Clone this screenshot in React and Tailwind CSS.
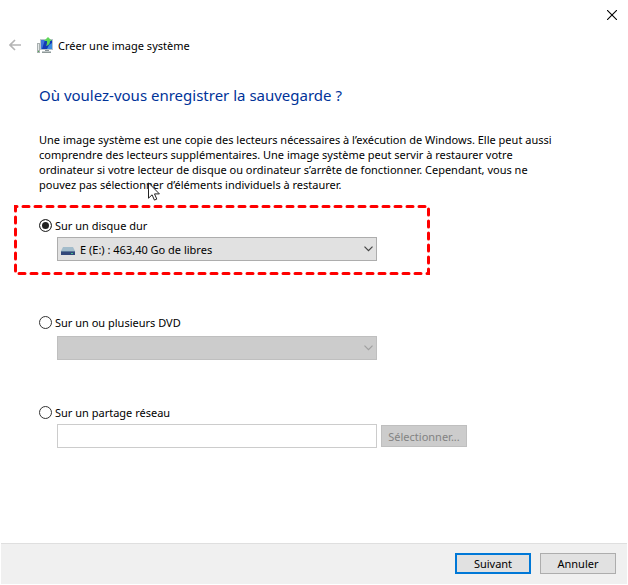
import React, { useState } from 'react';

const BackIcon = () => (
  <svg className="w-3 h-3" viewBox="0 0 12 12" fill="none" stroke="#b4b4b4" strokeWidth="1.6">
    <path d="M12 6H1M6 1L1 6l5 5" />
  </svg>
);

const CloseIcon = () => (
  <svg className="w-[10px] h-[10px]" viewBox="0 0 10 10" stroke="#000" strokeWidth="1.1">
    <path d="M0 0l10 10M10 0L0 10" />
  </svg>
);

const BackupIcon = () => (
  <svg className="w-4 h-4" viewBox="0 0 16 16">
    <path d="M0 6h3v10H0z" fill="#a9b0b0" />
    <path d="M1 7h1v6H1z" fill="#e4e8e8" />
    <path d="M1 14h1v1H1z" fill="#4fae4f" />
    <path d="M3 2h13v11H3z" fill="#b9c3cb" />
    <path d="M4 3h11v9H4z" fill="#1438b4" />
    <path d="M4 3h4L5 12H4z" fill="#3f74dc" />
    <path d="M12 8l3-2v6h-5z" fill="#3b8ce0" />
    <path d="M8 13h4v1H8z" fill="#8a9498" />
    <path d="M5 14h9v2H5z" fill="#c3caca" />
    <path d="M5 15h9v1H5z" fill="#8f9999" />
    <path d="M11 0l4 4h-2c0 3-1 4-4 5 1-2 1-3 1-5H7z" fill="#5fd858" />
  </svg>
);

const DriveIcon = () => (
  <svg className="w-[14px] h-2" viewBox="0 0 14 8">
    <path d="M2 0h10l2 4H0z" fill="#a3bccb" />
    <path d="M0 4h14v4H0z" fill="#33487a" />
    <path d="M0 4h14v1H0z" fill="#5b7899" />
    <path d="M10 6h2v1h-2z" fill="#45c08c" />
  </svg>
);

const ChevronIcon = ({ color }) => (
  <svg className="w-[9px] h-[6px]" viewBox="0 0 9 6" fill="none" stroke={color} strokeWidth="1.2">
    <path d="M0.5 0.7l4 4 4-4" />
  </svg>
);

const CursorIcon = () => (
  <svg className="w-3 h-[19px]" viewBox="0 0 12 19">
    <path
      d="M0.5 0.8v15.4l3.6-3.4 2.3 5.3 2.4-1-2.3-5.2h4.9z"
      fill="#fff"
      stroke="#222"
      strokeWidth="1"
    />
  </svg>
);

const Highlight = () => (
  <svg
    className="absolute -left-[25px] -top-3 w-[416px] h-[70px] pointer-events-none"
    viewBox="0 0 416 70"
    fill="none"
  >
    <rect
      x="1.5"
      y="1.5"
      width="413"
      height="67"
      stroke="#fe0000"
      strokeWidth="3"
      strokeLinecap="round"
      strokeDasharray="6 6"
      strokeDashoffset="-7.5"
    />
  </svg>
);

const RadioOption = ({ value, label, selected, onSelect }) => (
  <label className="flex items-center gap-[3px] h-4 w-fit">
    <input
      type="radio"
      name="destination"
      value={value}
      checked={selected === value}
      onChange={() => onSelect(value)}
      className="appearance-none shrink-0 w-[13px] h-[13px] rounded-full border border-[#333] bg-white checked:bg-[#222] checked:shadow-[inset_0_0_0_2px_#fff]"
    />
    {label}
  </label>
);

export default function App() {
  const [destination, setDestination] = useState('disk');

  return (
    <div className="min-h-screen flex flex-col px-px pb-px bg-white text-black text-[11px] leading-[15px] font-['Noto_Sans',sans-serif]">
      <div className="flex justify-end pt-[10px] pr-[10px]">
        <button type="button" aria-label="Fermer">
          <CloseIcon />
        </button>
      </div>

      <header className="flex items-center h-4 mt-[17px] pl-2">
        <button type="button" aria-label="Retour" disabled>
          <BackIcon />
        </button>
        <span className="ml-4">
          <BackupIcon />
        </span>
        <h1 className="ml-[5px]">Créer une image système</h1>
      </header>

      <main className="flex-1 pl-[38px] pr-4 pt-8">
        <h2 className="text-[15px] leading-5 text-[#003399]">
          Où voulez-vous enregistrer la sauvegarde ?
        </h2>

        <p className="relative mt-[27px] whitespace-nowrap">
          Une image système est une copie des lecteurs nécessaires à l’exécution de Windows. Elle peut aussi
          <br />
          comprendre des lecteurs supplémentaires. Une image système peut servir à restaurer votre
          <br />
          ordinateur si votre lecteur de disque ou ordinateur s’arrête de fonctionner. Cependant, vous ne
          <br />
          pouvez pas sélectionner d’éléments individuels à restaurer.
          <span className="absolute left-[109px] top-[50px]">
            <CursorIcon />
          </span>
        </p>

        <section className="relative mt-[25px]">
          <RadioOption value="disk" label="Sur un disque dur" selected={destination} onSelect={setDestination} />
          <div className="relative ml-[18px] mt-1 w-80">
            <select
              aria-label="Disque dur"
              className="block appearance-none w-full h-6 pl-[22px] pr-6 border border-[#adadad] bg-[#e1e1e1]"
            >
              <option>E (E:) : 463,40 Go de libres</option>
            </select>
            <span className="absolute left-1 top-[10px] pointer-events-none">
              <DriveIcon />
            </span>
            <span className="absolute right-1 top-[9px] pointer-events-none">
              <ChevronIcon color="#444" />
            </span>
          </div>
          <Highlight />
        </section>

        <section className="mt-[53px]">
          <RadioOption value="dvd" label="Sur un ou plusieurs DVD" selected={destination} onSelect={setDestination} />
          <div className="relative ml-[18px] mt-[6px] w-80">
            <select
              aria-label="Lecteur DVD"
              disabled
              className="block appearance-none w-full h-6 border border-[#bfbfbf] bg-[#cccccc]"
            />
            <span className="absolute right-1 top-[9px] pointer-events-none">
              <ChevronIcon color="#a0a0a0" />
            </span>
          </div>
        </section>

        <section className="mt-11">
          <RadioOption value="network" label="Sur un partage réseau" selected={destination} onSelect={setDestination} />
          <div className="flex items-center gap-1 ml-[18px] mt-1">
            <input
              type="text"
              aria-label="Partage réseau"
              disabled
              className="w-80 h-6 px-1 border border-[#cccccc] bg-white"
            />
            <button
              type="button"
              disabled
              className="w-[86px] h-[22px] border border-[#bfbfbf] bg-[#cccccc] text-[#838383]"
            >
              Sélectionner...
            </button>
          </div>
        </section>
      </main>

      <footer className="flex justify-end gap-[9px] pt-[9px] pb-[10px] pr-[11px] border-t border-[#dfdfdf] bg-[#f0f0f0]">
        <button type="button" className="w-[76px] h-[21px] leading-4 border-2 border-[#0078d7] bg-[#e1e1e1]">
          Suivant
        </button>
        <button type="button" className="w-[76px] h-[21px] leading-4 border border-[#adadad] bg-[#e1e1e1]">
          Annuler
        </button>
      </footer>
    </div>
  );
}
